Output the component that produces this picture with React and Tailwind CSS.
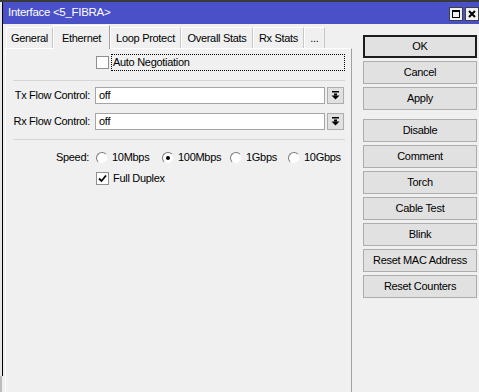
import React from 'react'

const tabs = [
  { name: 'General', w: 'w-[47px]' },
  { name: 'Ethernet', w: 'w-[57px]', active: true },
  { name: 'Loop Protect', w: 'w-[71px]' },
  { name: 'Overall Stats', w: 'w-[72px]' },
  { name: 'Rx Stats', w: 'w-[51px]' },
  { name: '...', w: 'w-[21px]' },
]

const speeds = [
  { label: '10Mbps', w: 'w-[66px]' },
  { label: '100Mbps', w: 'w-[68px]', on: true },
  { label: '1Gbps', w: 'w-[58px]' },
  { label: '10Gbps', w: 'w-[56px]' },
]

const Arrow = () => (
  <svg width="9" height="9" viewBox="0 0 9 9">
    <rect x="1" y="0" width="7" height="1.5" fill="#000" />
    <rect x="3" y="2.5" width="3" height="2" fill="#000" />
    <polygon points="0.5,4.5 8.5,4.5 4.5,8.5" fill="#000" />
  </svg>
)

const Check = ({ checked }) => (
  <div className="w-[13px] h-[13px] bg-white border border-[#8f8f8f] flex items-center justify-center shrink-0">
    {checked && (
      <svg width="9" height="9" viewBox="0 0 9 9">
        <path d="M1 4.5 L3.5 7 L8 1.5" stroke="#000" strokeWidth="1.8" fill="none" />
      </svg>
    )}
  </div>
)

const Radio = ({ on }) => (
  <div className="w-[12px] h-[12px] rounded-full bg-white border border-t-[#7a7a7a] border-l-[#7a7a7a] border-b-[#f0f0f0] border-r-[#f0f0f0] flex items-center justify-center shrink-0">
    {on && <div className="w-[4px] h-[4px] rounded-full bg-black" />}
  </div>
)

const Combo = ({ value }) => (
  <div className="flex items-center gap-[2px]">
    <div className="w-[230px] h-[17px] bg-white border border-[#a5a5a5] pl-[3px] leading-[15px]">{value}</div>
    <div className="w-[17px] h-[17px] bg-[#e1e1e1] border border-[#adadad] flex items-center justify-center">
      <Arrow />
    </div>
  </div>
)

const Btn = ({ label, def }) => (
  <div
    className={`h-[23px] w-[114px] bg-[#e1e1e1] flex items-center justify-center ${
      def ? 'border-2 border-[#1c1c1c]' : 'border border-[#adadad]'
    }`}
  >
    {label}
  </div>
)

export default function App() {
  return (
    <div
      className="w-[479px] h-[392px] bg-[#f0f0f0] overflow-hidden flex flex-col text-[11px] tracking-[-0.3px] text-black"
      style={{ fontFamily: '"Liberation Sans", Arial, sans-serif' }}
    >
      <div className="h-[2px] bg-[#3a3a3a] shrink-0" />
      <div className="flex flex-1 min-h-0">
        {/* left window frame */}
        <div className="w-[2px] flex flex-col shrink-0">
          <div className="flex-1 bg-[#e6e6e6]" />
          <div className="h-[16px] bg-[#bdbdbd]" />
        </div>
        <div className="w-[1px] bg-black shrink-0 mb-[16px]" />
        <div className="flex-1 flex flex-col min-w-0">
          {/* title bar */}
          <div className="h-[22px] bg-[#4a50c8] flex items-center justify-between shrink-0">
            <span className="text-white text-[11.5px] tracking-[-0.3px] pl-[5px]">Interface &lt;5_FIBRA&gt;</span>
            <div className="flex gap-[2px] mt-[2px]">
              <div className="w-[14px] h-[14px] bg-[#f0f0f0] border border-[#404040] flex items-center justify-center">
                <div className="w-[8px] h-[8px] border border-black border-t-2" />
              </div>
              <div className="w-[14px] h-[14px] bg-[#f0f0f0] border border-[#404040] flex items-center justify-center">
                <svg width="8" height="8" viewBox="0 0 8 8">
                  <path d="M1 1 L7 7 M7 1 L1 7" stroke="#000" strokeWidth="2" />
                </svg>
              </div>
            </div>
          </div>
          {/* body */}
          <div className="flex flex-1 min-h-0">
            <div className="w-[349px] flex flex-col pl-[2px]">
              {/* tabs */}
              <div className="flex items-end h-[24px] shrink-0 pl-[1px]">
                {tabs.map((t) =>
                  t.active ? (
                    <div
                      key={t.name}
                      className={`${t.w} h-[24px] -mb-[1px] z-10 bg-[#f0f0f0] border-t border-l border-white border-r border-r-[#a0a0a0] flex justify-center pt-[4px]`}
                    >
                      {t.name}
                    </div>
                  ) : (
                    <div
                      key={t.name}
                      className={`${t.w} h-[21px] bg-[#f0f0f0] border-t border-l border-white border-r border-r-[#c8c8c8] flex items-center justify-center`}
                    >
                      {t.name}
                    </div>
                  )
                )}
              </div>
              {/* panel */}
              <div className="flex-1 border-t border-l border-white border-r border-r-[#a0a0a0] flex flex-col">
                <div className="flex items-center h-[17px] mt-[5px]">
                  <div className="w-[84px]" />
                  <div className="ml-[6px]">
                    <Check />
                  </div>
                  <div className="ml-[2px] w-[234px] h-[17px] border border-dotted border-black pl-[1px] leading-[15px]">
                    Auto Negotiation
                  </div>
                </div>
                <div className="h-[1px] bg-[#d5d5d5] mt-[9px] ml-[7px] mr-[6px]" />
                <div className="flex items-center h-[17px] mt-[6px]">
                  <div className="w-[84px] text-right">Tx Flow Control:</div>
                  <div className="ml-[5px]">
                    <Combo value="off" />
                  </div>
                </div>
                <div className="flex items-center h-[17px] mt-[9px]">
                  <div className="w-[84px] text-right">Rx Flow Control:</div>
                  <div className="ml-[5px]">
                    <Combo value="off" />
                  </div>
                </div>
                <div className="h-[1px] bg-[#d5d5d5] mt-[9px] ml-[7px] mr-[6px]" />
                <div className="flex items-center h-[17px] mt-[9px]">
                  <div className="w-[84px] text-right pr-[1px]">Speed:</div>
                  <div className="ml-[6px] flex items-center">
                    {speeds.map((s) => (
                      <div key={s.label} className={`${s.w} flex items-center gap-[4px]`}>
                        <Radio on={s.on} />
                        <span>{s.label}</span>
                      </div>
                    ))}
                  </div>
                </div>
                <div className="flex items-center h-[17px] mt-[4px]">
                  <div className="w-[84px]" />
                  <div className="ml-[6px]">
                    <Check checked />
                  </div>
                  <span className="ml-[4px]">Full Duplex</span>
                </div>
              </div>
            </div>
            {/* buttons */}
            <div className="flex flex-col ml-[11px] pt-[11px] gap-[3px]">
              <Btn label="OK" def />
              <Btn label="Cancel" />
              <Btn label="Apply" />
              <div className="h-[3px]" />
              {['Disable', 'Comment', 'Torch', 'Cable Test', 'Blink', 'Reset MAC Address', 'Reset Counters'].map((b) => (
                <Btn key={b} label={b} />
              ))}
            </div>
          </div>
        </div>
      </div>
    </div>
  )
}
